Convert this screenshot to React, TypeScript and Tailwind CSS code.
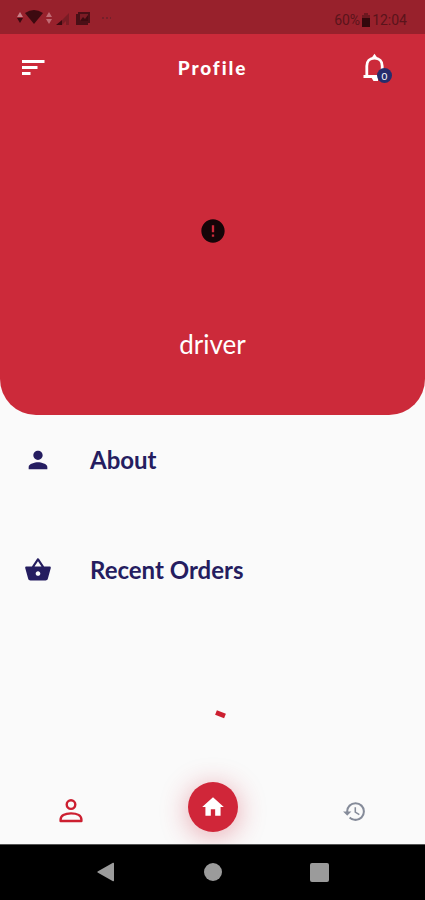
import { MdError, MdHistory, MdHome, MdPerson, MdShoppingBasket } from "react-icons/md";

const menuItems = [
  { label: "About", icon: MdPerson },
  { label: "Recent Orders", icon: MdShoppingBasket },
];

function StatusBar() {
  return (
    <div className="flex h-[34px] items-center justify-between bg-[#98212c] pt-1 pr-[18px] pl-4 text-[#5a141b]">
      <svg width="98" height="18" viewBox="0 0 98 18" aria-hidden="true">
        <path d="M1 7 4 2l3 5z" fill="#c98088" />
        <path d="M1 8h6l-3 5z" fill="#3d0a10" />
        <path d="M9 3Q18-3 27 3L18 14z" fill="#3d0a10" />
        <path d="M30 7l3-5 3 5zM30 9h6l-3 5z" fill="#c06a73" />
        <path d="M40 15l6-5v5z" fill="#3d0a10" />
        <path d="M46 10l7-7v12h-3v-4l-4 4z" fill="#7a1c25" />
        <path d="M62 2h12v11h-2v2H60V4h2z" fill="#4a0f16" />
        <path d="M64 4h8v7h-8z" fill="#7c1b25" />
        <path d="M64 11l3-4 2 2 3-4v6z" fill="#3d0a10" />
        <path d="M86 8h2M90 8h2M94 8h1" stroke="#75202a" strokeWidth="2" />
      </svg>
      <div className="flex items-center gap-px pt-px font-[Roboto,sans-serif] text-sm leading-4">
        <span>60%</span>
        <svg width="10" height="14" viewBox="0 0 10 14" aria-hidden="true">
          <path d="M3 0h4v2H3z" fill="#6d1820" />
          <path d="M1 2h8v3H1z" fill="#6d1820" />
          <path d="M1 5h8v9H1z" fill="#33080c" />
        </svg>
        <span>12:04</span>
      </div>
    </div>
  );
}

function ProfileHeader() {
  return (
    <header className="flex h-[381px] flex-col rounded-b-[36px] bg-[#cc2a3a] text-white">
      <div className="flex h-[68px] items-center justify-between px-5">
        <button type="button" aria-label="Menu" className="flex h-10 w-14 items-center">
          <svg width="26" height="18" viewBox="0 0 26 18" fill="none" stroke="white" strokeWidth="2.8">
            <path d="M2 2.500h22.500M2 8.500h15.500M2 14.500h8.500" />
          </svg>
        </button>
        <h1 className="text-[19px] leading-6 font-black tracking-widest">Profile</h1>
        <button type="button" aria-label="Notifications" className="relative flex h-10 w-14 items-center justify-center">
          <svg width="28" height="30" viewBox="0 0 28 30" fill="none" stroke="white" strokeWidth="2.8">
            <path d="M.5 23.500h22M3.800 23.500V13c0-4.800 3-7.800 7.700-7.800s7.700 3 7.700 7.800v10.500" />
            <path d="M8.500 5 11.500.8l3 4.200z" fill="white" stroke="none" />
            <path d="M8 24h7v4h-4.500z" fill="white" stroke="none" />
          </svg>
          <span className="absolute top-5 left-[28px] flex h-[15px] w-[15px] items-center justify-center rounded-full bg-[#252d6c] text-[10px] leading-3">
            0
          </span>
        </button>
      </div>
      <div className="flex flex-1 flex-col items-center pt-[115px]">
        <MdError size={28} className="text-[#150508]" />
        <p className="mt-[83px] text-[26px] leading-8">driver</p>
      </div>
    </header>
  );
}

function BottomBar() {
  return (
    <nav className="flex h-[74px] items-center bg-[#fafafa]">
      <button type="button" aria-label="Profile" className="flex flex-1 items-center justify-center pt-2 text-[#cc1f30]">
        <svg width="24" height="24" viewBox="0 0 24 24" fill="none" stroke="currentColor" strokeWidth="2.4">
          <circle cx="12" cy="5.600" r="4.300" />
          <path d="M1.600 22v-1.400c0-3.800 4-6.200 10.400-6.200s10.400 2.400 10.400 6.200V22z" strokeLinejoin="round" />
        </svg>
      </button>
      <div className="flex flex-1 justify-center">
        <button
          type="button"
          aria-label="Home"
          className="flex h-[50px] w-[50px] items-center justify-center rounded-full bg-[#d02639] text-white shadow-[0_4px_28px_rgba(208,38,57,0.4)]"
        >
          <MdHome size={26} />
        </button>
      </div>
      <button type="button" aria-label="History" className="flex flex-1 items-center justify-center pt-2 text-[#858b99]">
        <MdHistory size={25} />
      </button>
    </nav>
  );
}

function SystemNav() {
  return (
    <div className="flex h-14 items-center justify-center gap-[88px] border-t border-[#555] bg-black pb-px text-[#9b9b9b]">
      <button type="button" aria-label="Back">
        <svg width="19" height="20" viewBox="0 0 19 20" fill="currentColor">
          <path d="M1 9.200 16 .8c.6-.3 1 0 1 .6v17.200c0 .6-.4.9-1 .6L1 10.800c-.8-.4-.8-1.200 0-1.600z" />
        </svg>
      </button>
      <button type="button" aria-label="Home screen" className="h-[18px] w-[18px] rounded-full bg-current" />
      <button type="button" aria-label="Recent apps" className="h-[19px] w-[19px] rounded-xs bg-current" />
    </div>
  );
}

export default function App() {
  return (
    <div className="flex min-h-screen flex-col bg-[#fafafa] font-[Lato,sans-serif]">
      <StatusBar />
      <ProfileHeader />
      <main className="flex flex-1 flex-col">
        <ul className="flex flex-col gap-5">
          {menuItems.map(({ label, icon: Icon }) => (
            <li key={label}>
              <button
                type="button"
                className="flex h-[90px] w-full items-center gap-[38px] px-6 text-2xl leading-8 font-bold text-[#251d60]"
              >
                <Icon size={28} />
                {label}
              </button>
            </li>
          ))}
        </ul>
        <div className="flex flex-1 items-end justify-center pb-5" role="status" aria-label="Loading">
          <svg width="40" height="40" viewBox="0 0 40 40" fill="none">
            <path d="M23 2.500 32 6" stroke="#cc1f30" strokeWidth="5" />
          </svg>
        </div>
      </main>
      <BottomBar />
      <SystemNav />
    </div>
  );
}
